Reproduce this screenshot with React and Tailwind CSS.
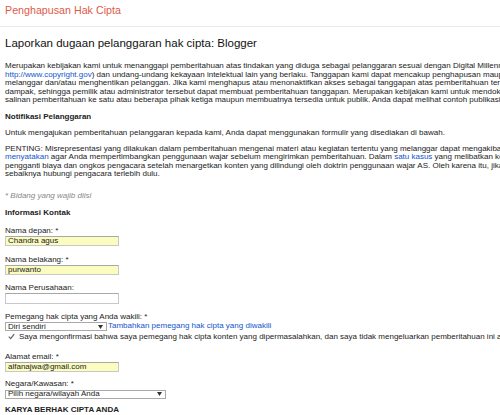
import React from "react";

const A = ({ children }) => <span className="text-[#1155cc]">{children}</span>;

function Line({ children, className = "" }) {
  return <div className={"whitespace-nowrap " + className}>{children}</div>;
}

function TextInput({ value, yellow, w = "w-[114px]" }) {
  return (
    <div
      className={
        "h-[10.5px] border border-[#c8c8c8] border-t-[#a8a8a8] text-[8px] leading-[8.5px] pl-[2px] text-[#222] " +
        w +
        (yellow ? " bg-[#fbfcc0]" : " bg-white")
      }
    >
      {value}
    </div>
  );
}

function Select({ value, w }) {
  return (
    <div
      className={
        "h-[9px] shrink-0 border border-[#a9a9a9] bg-white flex items-center justify-between pl-[2px] pr-[3px] text-[8px] leading-[8px] text-[#222] " +
        w
      }
    >
      <span>{value}</span>
      <svg width="5" height="4" viewBox="0 0 5 4">
        <path d="M0 0 L5 0 L2.5 4 Z" fill="#333" />
      </svg>
    </div>
  );
}

export default function App() {
  return (
    <div
      className="w-[500px] h-[415px] overflow-hidden bg-white text-[#222]"
      style={{ fontFamily: '"Liberation Sans", Arial, sans-serif' }}
    >
      <div className="h-[27px] border-b border-[#ebebeb] px-[5px] pt-[1px]">
        <div className="text-[10.7px] leading-[18px] text-[#e05a49]">Penghapusan Hak Cipta</div>
      </div>
      <div className="px-[5px]">
        <div className="mt-[9px] text-[11.5px] leading-[14px] text-[#111] whitespace-nowrap">
          Laporkan dugaan pelanggaran hak cipta: Blogger
        </div>

        <div className="mt-[12px] text-[8px] leading-[8.6px]">
          <Line>
            Merupakan kebijakan kami untuk menanggapi pemberitahuan atas tindakan yang diduga sebagai pelanggaran sesuai dengan Digital Millennium Copyright Act (teks lengkapnya dapat dilihat di situs Kantor Hak Cipta AS:
          </Line>
          <Line>
            <A>http://www.copyright.gov</A>) dan undang-undang kekayaan intelektual lain yang berlaku. Tanggapan kami dapat mencakup penghapusan maupun penonaktifan akses ke materi yang diduga
          </Line>
          <Line>
            melanggar dan/atau menghentikan pelanggan. Jika kami menghapus atau menonaktifkan akses sebagai tanggapan atas pemberitahuan tersebut, kami akan berupaya menghubungi
          </Line>
          <Line>
            dampak, sehingga pemilik atau administrator tersebut dapat membuat pemberitahuan tanggapan. Merupakan kebijakan kami untuk mendokumentasikan semua pemberitahuan
          </Line>
          <Line>
            salinan pemberitahuan ke satu atau beberapa pihak ketiga maupun membuatnya tersedia untuk publik. Anda dapat melihat contoh publikasi{" "}
            <span className="text-[#a3199e]">ini</span>.
          </Line>
        </div>

        <div className="mt-[8px] text-[8px] leading-[8.6px] font-bold">Notifikasi Pelanggaran</div>

        <div className="mt-[7.5px] text-[8px] leading-[8.6px]">
          <Line>Untuk mengajukan pemberitahuan pelanggaran kepada kami, Anda dapat menggunakan formulir yang disediakan di bawah.</Line>
        </div>

        <div className="mt-[7px] text-[8px] leading-[8.6px]">
          <Line>
            PENTING: Misrepresentasi yang dilakukan dalam pemberitahuan mengenai materi atau kegiatan tertentu yang melanggar dapat mengakibatkan tanggung jawab hukum. Pengadilan telah
          </Line>
          <Line>
            <A>menyatakan</A> agar Anda mempertimbangkan penggunaan wajar sebelum mengirimkan pemberitahuan. Dalam <A>satu kasus</A> yang melibatkan konten yang diunggah, pengadilan memerintahkan
          </Line>
          <Line>
            pengganti biaya dan ongkos pengacara setelah menargetkan konten yang dilindungi oleh doktrin penggunaan wajar AS. Oleh karena itu, jika Anda tidak yakin apakah materi tersebut
          </Line>
          <Line>sebaiknya hubungi pengacara terlebih dulu.</Line>
        </div>

        <div className="mt-[13px] text-[8px] leading-[8.6px] italic text-[#888]">* Bidang yang wajib diisi</div>

        <div className="mt-[8.5px] text-[8px] leading-[8.6px] font-bold">Informasi Kontak</div>

        <div className="mt-[9px] text-[8px] leading-[8.6px]">Nama depan: *</div>
        <div className="mt-[0.5px]">
          <TextInput value="Chandra agus" yellow />
        </div>

        <div className="mt-[9.5px] text-[8px] leading-[8.6px]">Nama belakang: *</div>
        <div className="mt-[0.5px]">
          <TextInput value="purwanto" yellow />
        </div>

        <div className="mt-[8.5px] text-[8px] leading-[8.6px]">Nama Perusahaan:</div>
        <div className="mt-[0.5px]">
          <TextInput value="" />
        </div>

        <div className="mt-[9px] text-[8px] leading-[8.6px]">Pemegang hak cipta yang Anda wakili: *</div>
        <div className="mt-[1px] flex items-center gap-[1px] whitespace-nowrap">
          <Select value="Diri sendiri" w="w-[102px]" />
          <span className="text-[8px] leading-[8.6px] text-[#1155cc]">Tambahkan pemegang hak cipta yang diwakili</span>
        </div>

        <div className="mt-[1.5px] flex items-center gap-[4px] pl-[3px] text-[8px] leading-[8.6px] whitespace-nowrap">
          <svg width="7" height="7" viewBox="0 0 7 7" className="shrink-0">
            <path d="M0.8 3.6 L2.7 5.6 L6.2 1.2" stroke="#666" strokeWidth="1.3" fill="none" />
          </svg>
          <span>
            Saya mengonfirmasi bahwa saya pemegang hak cipta konten yang dipermasalahkan, dan saya tidak mengeluarkan pemberitahuan ini atas nama pihak lain.
          </span>
        </div>

        <div className="mt-[11.5px] text-[8px] leading-[8.6px]">Alamat email: *</div>
        <div className="mt-[0.5px]">
          <TextInput value="alfanajwa@gmail.com" yellow />
        </div>

        <div className="mt-[8px] text-[8px] leading-[8.6px]">Negara/Kawasan: *</div>
        <div className="mt-[1px]">
          <Select value="Pilih negara/wilayah Anda" w="w-[161px]" />
        </div>

        <div className="mt-[7px] text-[8px] leading-[8.6px] font-bold">KARYA BERHAK CIPTA ANDA</div>
      </div>
    </div>
  );
}
